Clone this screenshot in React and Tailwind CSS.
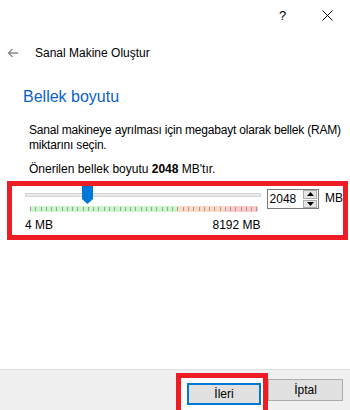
export default function App() {
  const ticks = Array.from({ length: 44 });

  return (
    <div className="w-[350px] h-[410px] bg-white flex flex-col overflow-hidden text-black text-[12px] leading-[15px] font-['Liberation_Sans',Arial,sans-serif]">
      {/* title bar */}
      <div className="h-[30px] flex justify-end items-center shrink-0">
        <div className="w-[45px] flex justify-center text-[13px]">?</div>
        <div className="w-[45px] flex justify-center">
          <svg width="11" height="11" viewBox="0 0 11 11">
            <path d="M0.5 0.5 L10.5 10.5 M10.5 0.5 L0.5 10.5" stroke="#000" strokeWidth="1" />
          </svg>
        </div>
      </div>

      {/* header */}
      <div className="mt-[13px] h-[20px] flex items-center">
        <svg width="12" height="10" viewBox="0 0 12 10" className="ml-[7px]">
          <path d="M11 5 H1.5 M5.5 1 L1.5 5 L5.5 9" stroke="#8a8a8a" strokeWidth="1.3" fill="none" />
        </svg>
        <span className="ml-[16px]">Sanal Makine Oluştur</span>
      </div>

      <div className="mt-[23px] ml-[23px] text-[16px] leading-[22px] text-[#0c5fca]">Bellek boyutu</div>

      <div className="mt-[15px] ml-[29px] w-[318px] tracking-[-0.2px]">
        Sanal makineye ayrılması için megabayt olarak bellek (RAM) miktarını seçin.
      </div>

      <div className="mt-[9px] ml-[29px]">
        Önerilen bellek boyutu <b>2048</b> MB'tır.
      </div>

      {/* slider group (annotated) */}
      <div className="mt-[4px] ml-[7px] w-[341px] border-[5px] border-[#ee1c24] pb-[2px]">
        <div className="flex items-start pl-[13px]">
          <div className="w-[238px]">
            <div className="relative h-[26px]">
              <div className="absolute left-0 right-0 top-[7px] h-[4px] bg-[#e7eaea] border border-[#d6d6d6]" />
              <div className="absolute left-[5px] top-[20px] w-[228px] h-[6px] flex">
                <div className="w-[147px] bg-[#ccf7cc]" />
                <div className="w-[50px] bg-[#fddac8]" />
                <div className="w-[31px] bg-[#fdcaca]" />
              </div>
              <div className="absolute left-[5px] top-[21px] w-[228px] h-[4px] flex justify-between">
                {ticks.map((_, i) => (
                  <div key={i} className="w-px h-full bg-[#9c9c9c]" />
                ))}
              </div>
              <svg width="11" height="18" viewBox="0 0 11 18" className="absolute left-[57px] top-0">
                <polygon points="0,0 11,0 11,13 5.5,18 0,13" fill="#0078d7" />
              </svg>
            </div>
            <div className="mt-[6px] flex justify-between">
              <span>4 MB</span>
              <span>8192 MB</span>
            </div>
          </div>
          <div className="ml-[6px] mt-[3px] w-[53px] h-[20px] border border-[#7a7a7a] flex items-center">
            <span className="ml-[2px] flex-1">2048</span>
            <div className="mr-[1px] w-[14px] h-[18px] flex flex-col gap-px">
              <div className="flex-1 bg-[#e5e5e5] border border-[#acacac] flex items-center justify-center">
                <svg width="7" height="4" viewBox="0 0 7 4"><polygon points="3.5,0 7,4 0,4" fill="#000" /></svg>
              </div>
              <div className="flex-1 bg-[#e5e5e5] border border-[#acacac] flex items-center justify-center">
                <svg width="7" height="4" viewBox="0 0 7 4"><polygon points="0,0 7,0 3.5,4" fill="#000" /></svg>
              </div>
            </div>
          </div>
          <span className="ml-[6px] mt-[5px]">MB</span>
        </div>
      </div>

      {/* bottom bar */}
      <div className="mt-auto h-[41px] shrink-0 bg-[#f0f0f0] border-t border-[#dfdfdf] flex items-start justify-end pr-[7px]">
        <div className="mt-[3px] h-[45px] border-[5px] border-[#ee1c24] bg-white pl-[6px] pr-[2px] pt-[5px]">
          <button type="button" className="w-[74px] h-[22px] bg-[#e1e1e1] border-2 border-[#0078d7] text-[12px]">
            İleri
          </button>
        </div>
        <button type="button" className="mt-[9px] w-[75px] h-[22px] bg-[#e1e1e1] border border-[#adadad] text-[12px]">
          İptal
        </button>
      </div>
    </div>
  );
}
